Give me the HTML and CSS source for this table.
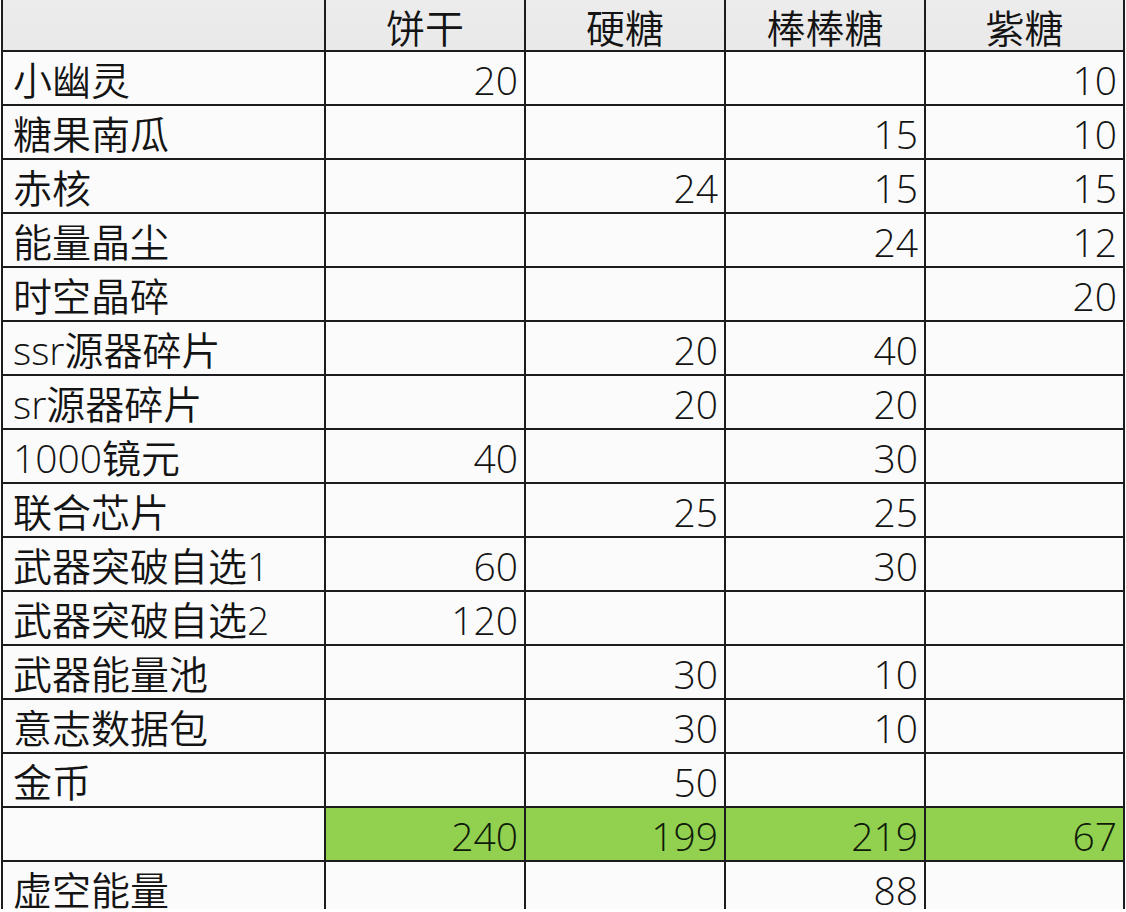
FILE: index.html
```html
<!DOCTYPE html>
<html lang="zh-CN">
<head>
<meta charset="utf-8">
<title>糖果兑换表</title>
<link rel="stylesheet" href="styles.css">
</head>
<body>
<div class="sheet">
  <div class="cell head"></div>
  <div class="cell head center">饼干</div>
  <div class="cell head center">硬糖</div>
  <div class="cell head center">棒棒糖</div>
  <div class="cell head center">紫糖</div>

  <div class="cell">小幽灵</div><div class="cell num">20</div><div class="cell num"></div><div class="cell num"></div><div class="cell num">10</div>
  <div class="cell">糖果南瓜</div><div class="cell num"></div><div class="cell num"></div><div class="cell num">15</div><div class="cell num">10</div>
  <div class="cell">赤核</div><div class="cell num"></div><div class="cell num">24</div><div class="cell num">15</div><div class="cell num">15</div>
  <div class="cell">能量晶尘</div><div class="cell num"></div><div class="cell num"></div><div class="cell num">24</div><div class="cell num">12</div>
  <div class="cell">时空晶碎</div><div class="cell num"></div><div class="cell num"></div><div class="cell num"></div><div class="cell num">20</div>
  <div class="cell">ssr源器碎片</div><div class="cell num"></div><div class="cell num">20</div><div class="cell num">40</div><div class="cell num"></div>
  <div class="cell">sr源器碎片</div><div class="cell num"></div><div class="cell num">20</div><div class="cell num">20</div><div class="cell num"></div>
  <div class="cell">1000镜元</div><div class="cell num">40</div><div class="cell num"></div><div class="cell num">30</div><div class="cell num"></div>
  <div class="cell">联合芯片</div><div class="cell num"></div><div class="cell num">25</div><div class="cell num">25</div><div class="cell num"></div>
  <div class="cell">武器突破自选1</div><div class="cell num">60</div><div class="cell num"></div><div class="cell num">30</div><div class="cell num"></div>
  <div class="cell">武器突破自选2</div><div class="cell num">120</div><div class="cell num"></div><div class="cell num"></div><div class="cell num"></div>
  <div class="cell">武器能量池</div><div class="cell num"></div><div class="cell num">30</div><div class="cell num">10</div><div class="cell num"></div>
  <div class="cell">意志数据包</div><div class="cell num"></div><div class="cell num">30</div><div class="cell num">10</div><div class="cell num"></div>
  <div class="cell">金币</div><div class="cell num"></div><div class="cell num">50</div><div class="cell num"></div><div class="cell num"></div>

  <div class="cell"></div><div class="cell num total">240</div><div class="cell num total">199</div><div class="cell num total">219</div><div class="cell num total">67</div>

  <div class="cell">虚空能量</div><div class="cell num"></div><div class="cell num"></div><div class="cell num">88</div><div class="cell num"></div>
</div>
</body>
</html>
```

FILE: styles.css
```css
html, body {
  margin: 0;
  padding: 0;
  background: #ffffff;
}

body {
  font-family: "Open Sans", "Noto Sans CJK SC", sans-serif;
  font-weight: 350;
  color: #141414;
  width: 1126px;
  height: 912px;
  overflow: hidden;
}

.sheet {
  margin-left: 1px;
  width: 1124px;
  display: grid;
  grid-template-columns: 321px 198px 198px 198px 197px;
  grid-template-rows: 50px repeat(15, 52px) 47px;
  column-gap: 2px;
  row-gap: 2px;
  padding: 0 2px;
  box-sizing: border-box;
  background: #1c1c1f;
}

.cell {
  background: #fbfbfb;
  font-size: 39px;
  line-height: 50px;
  padding: 3px 0 0 10px;
  white-space: nowrap;
}

.head {
  background: linear-gradient(#ececec, #e9e9e9);
}

.center {
  text-align: center;
  padding-left: 0;
}

.num {
  text-align: right;
  padding: 3px 6px 0 0;
}

.total {
  background: #92d050;
  color: #0f1a08;
}
```
